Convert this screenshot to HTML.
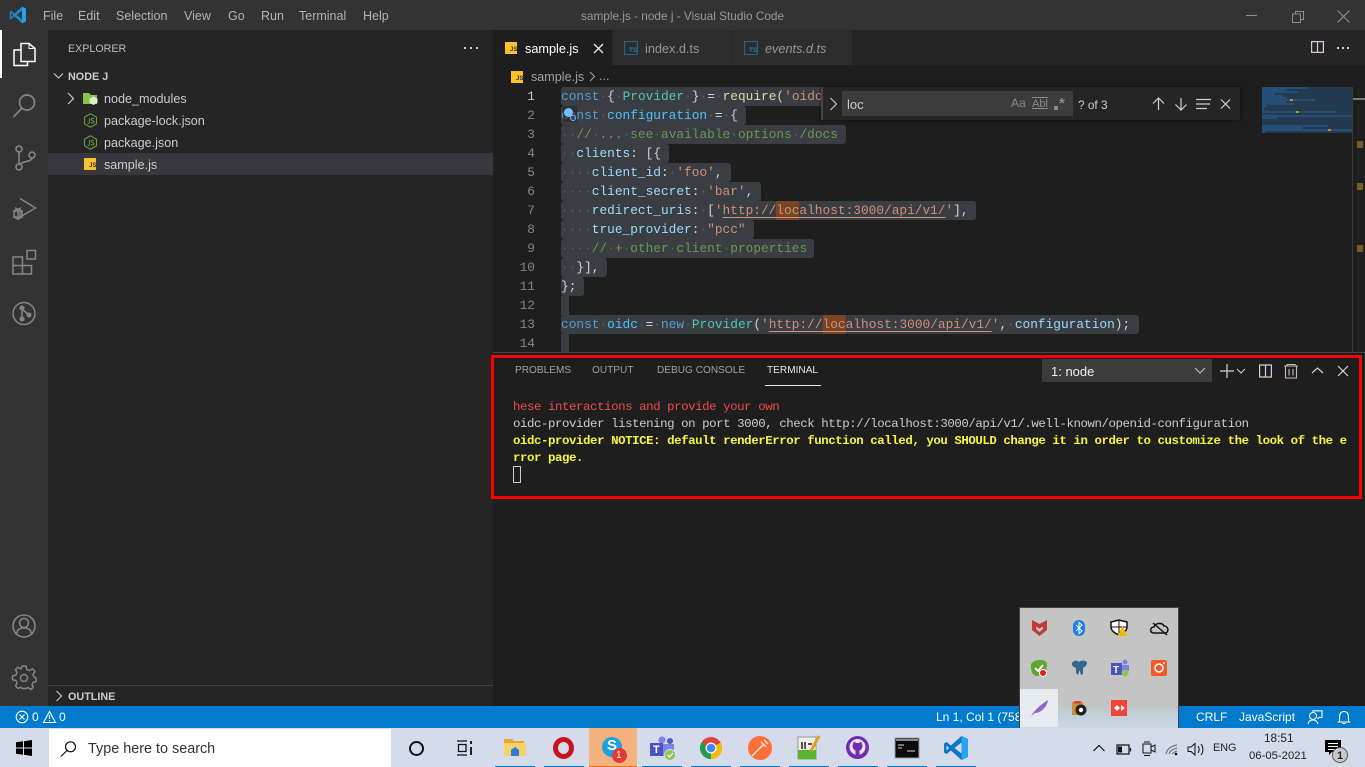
<!DOCTYPE html>
<html><head><meta charset="utf-8"><title>sample.js - node j - Visual Studio Code</title>
<style>
*{box-sizing:border-box}
html,body{margin:0;padding:0;width:1365px;height:767px;overflow:hidden;background:#1e1e1e}
body{position:relative;font-family:"Liberation Sans",sans-serif;color:#ccc}
.b{position:absolute}
.t{position:absolute;white-space:pre;line-height:20px;height:20px}
svg{position:absolute;overflow:visible}
.m{font-size:12.5px;color:#b4b4b4;top:6px}
.tree{font-size:12.6px;color:#ccc}
.c{position:absolute;left:561px;height:19px;line-height:19px;font-family:"Liberation Mono",monospace;font-size:12.82px;white-space:pre;color:#d4d4d4}
.n{position:absolute;width:40px;left:495px;text-align:right;height:19px;line-height:19px;font-family:"Liberation Mono",monospace;font-size:12.82px;color:#858585}
.s{position:absolute;left:561px;height:19px;background:#3a3d41;border-radius:3px}
.h{position:absolute;height:19px;background:#7a4527;width:23px}
i{font-style:normal;color:#5c5f62}
.k{color:#569cd6}.v{color:#4fc1ff}.p{color:#9cdcfe}.g{color:#4ec9b0}.r{color:#ce9178}.u{color:#6a9955}.f{color:#dcdcaa}
.l{text-decoration:underline;text-underline-offset:3px;text-decoration-thickness:1px}
.tm{position:absolute;left:513px;font-family:"Liberation Mono",monospace;font-size:12.4px;letter-spacing:-.43px;height:17px;line-height:17px;white-space:pre;color:#ccc}
.pt{font-size:10.1px;color:#a0a0a0;top:361px}
.st{font-size:12px;color:#fff;top:707px}
.tb{position:absolute;top:766px;height:1px;background:#0078d4;width:40px}
</style></head><body>

<!-- title bar -->
<div class="b" style="left:0;top:0;width:1365px;height:30px;background:#333"></div>
<svg style="left:9px;top:6px" width="18" height="18" viewBox="0 0 18 18"><path d="M13 .8 17 2.6V15.4L13 17.2 5.6 10.4 2 13.2.8 12.6V5.4L2 4.8 5.6 7.6Z" fill="#1a8ad4"/><path d="M13 .8 17 2.6V15.4L13 17.2Z" fill="#27a3ee"/><path d="M13 4.8V13.2L7.5 9Z" fill="#333"/><path d="M2.2 6.8V11.2L4.3 9Z" fill="#333"/></svg>
<div class="t m" style="left:43px">File</div>
<div class="t m" style="left:78px">Edit</div>
<div class="t m" style="left:116px">Selection</div>
<div class="t m" style="left:184px">View</div>
<div class="t m" style="left:228px">Go</div>
<div class="t m" style="left:261px">Run</div>
<div class="t m" style="left:299px">Terminal</div>
<div class="t m" style="left:363px">Help</div>
<div class="t" style="left:581px;top:6px;font-size:11.8px;color:#999">sample.js - node j - Visual Studio Code</div>
<svg style="left:1240px;top:8px" width="125" height="16" fill="none" stroke="#8e8e8e"><path d="M6 7.5H17"/><path d="M52.5 6V14.5H60.5V6ZM55.5 5.5V3.5H63.5V11.5H61"/><path d="M97.5 2.5 109.5 14.5M109.5 2.5 97.5 14.5" stroke-width="1.2"/></svg>

<!-- activity bar -->
<div class="b" style="left:0;top:30px;width:48px;height:676px;background:#333"></div>
<div class="b" style="left:0;top:30px;width:2px;height:48px;background:#fff"></div>
<svg style="left:12px;top:41px" width="24" height="26" fill="none" stroke="#fff" stroke-width="1.5"><path d="M9 2.5H17L23 7.5V20.5H9Z"/><path d="M17 2.5V7.5H23" stroke-width="1"/><path d="M9 9H2V24.5H15.5V20.5"/></svg>
<svg style="left:12px;top:93px" width="24" height="26" fill="none" stroke="#858585" stroke-width="1.7"><circle cx="15" cy="9.5" r="7.5"/><path d="M10 15 1.5 24"/></svg>
<svg style="left:12px;top:145px" width="24" height="26" fill="none" stroke="#858585" stroke-width="1.6"><circle cx="7" cy="4" r="3"/><circle cx="7" cy="22" r="3"/><circle cx="20" cy="10" r="3"/><path d="M7 7V19M20 13C20 17 9 16 8 20"/></svg>
<svg style="left:12px;top:197px" width="26" height="26" fill="none" stroke="#858585" stroke-width="1.5"><path d="M8 1.5 23.5 11 8 20V15"/><ellipse cx="6" cy="17" rx="4" ry="5"/><path d="M1 14H11M1 20H11M6 12V22M3 10.5 5 12.5M9 10.5 7 12.5"/></svg>
<svg style="left:12px;top:249px" width="26" height="26" fill="none" stroke="#858585" stroke-width="1.5"><path d="M1 8H10.5V25H1ZM1 16.5H19.500V25H10.500M10.500 8V16.500"/><path d="M15 1.500H23.500V10H15Z"/></svg>
<svg style="left:12px;top:301px" width="24" height="24" fill="none" stroke="#858585" stroke-width="1.5"><circle cx="12" cy="12.500" r="11"/><path d="M10 8V18M10 8 16.500 13.500"/><circle cx="10" cy="7" r="1.800" fill="#858585"/><circle cx="10" cy="18" r="1.800" fill="#858585"/><circle cx="17" cy="14" r="1.800" fill="#858585"/></svg>
<svg style="left:12px;top:614px" width="24" height="24" fill="none" stroke="#858585" stroke-width="1.6"><circle cx="12" cy="12" r="11"/><circle cx="12" cy="9" r="4.500"/><path d="M4.500 20C5 15 9 14 12 14S19 15 19.500 20"/></svg>
<svg style="left:12px;top:665px" width="24" height="24" fill="none" stroke="#858585" stroke-width="1.500"><path d="M10 1H14L14.800 4.500 17.500 5.600 20.500 3.800 23 6.500 21 9.500 22 12 24 13V16.500L21 17.500 20 20 21.500 22 19 24.500 16 22.500 14.500 23.500H10L9 22 6 23.500 3.500 21 5 18 4 15.500 .5 14.800V11L4 10 5 7.500 3.500 4.500 6 2.200 9 4Z" stroke-linejoin="round"/><circle cx="12" cy="13" r="3.500"/></svg>

<!-- sidebar -->
<div class="b" style="left:48px;top:30px;width:445px;height:676px;background:#252526"></div>
<div class="t" style="left:68px;top:39px;font-size:10.700px;color:#bbb">EXPLORER</div>
<div class="b" style="left:464px;top:47px;width:2px;height:2px;background:#ccc;box-shadow:6px 0 #ccc,12px 0 #ccc"></div>
<svg style="left:52px;top:70px" width="12" height="12" fill="none" stroke="#ccc" stroke-width="1.100"><path d="M2 3.500 6.500 8 11 3.500"/></svg>
<div class="t" style="left:68px;top:67px;font-size:10.800px;font-weight:bold;color:#ccc">NODE J</div>
<div class="b" style="left:48px;top:153px;width:445px;height:22px;background:#37373d"></div>
<svg style="left:66px;top:92px" width="12" height="14" fill="none" stroke="#ccc" stroke-width="1.200"><path d="M2 1 7.500 6.500 2 12"/></svg>
<svg style="left:83px;top:92px" width="16" height="14"><path d="M0 1H6L8 3H14V12H0Z" fill="#8bc34a"/><path d="M10.500 4.500 14.500 6.800V10.800L10.500 13 6.500 10.800V6.800Z" fill="#dcedc8"/></svg>
<div class="t tree" style="left:104px;top:89px">node_modules</div>
<svg style="left:83px;top:113px" width="15" height="15" fill="none" stroke="#6d9b3a" stroke-width="1.100"><path d="M7.500.8 13.500 4.200V10.800L7.500 14.200 1.500 10.800V4.200Z"/><path d="M6.500 5V9.500C6.500 10.500 5 10.500 4.500 9.800M11 6C10 4.800 8 5 8.200 6.400 8.400 7.800 11 7.300 11 8.800 11 10.300 8.800 10.300 8 9.300" stroke-width=".9"/></svg>
<div class="t tree" style="left:104px;top:111px">package-lock.json</div>
<svg style="left:83px;top:135px" width="15" height="15" fill="none" stroke="#6d9b3a" stroke-width="1.100"><path d="M7.500.8 13.500 4.200V10.800L7.500 14.200 1.500 10.800V4.200Z"/><path d="M6.500 5V9.500C6.500 10.500 5 10.500 4.500 9.800M11 6C10 4.800 8 5 8.200 6.400 8.400 7.800 11 7.300 11 8.800 11 10.300 8.800 10.300 8 9.300" stroke-width=".9"/></svg>
<div class="t tree" style="left:104px;top:133px">package.json</div>
<div class="b" style="left:84px;top:158px;width:12px;height:12px;background:#fbc02d"></div>
<div class="t" style="left:89px;top:156px;font-size:6px;font-weight:bold;color:#333">JS</div>
<div class="t tree" style="left:104px;top:155px">sample.js</div>
<div class="b" style="left:48px;top:685px;width:445px;height:1px;background:#3f3f46"></div>
<svg style="left:55px;top:690px" width="8" height="12" fill="none" stroke="#ccc" stroke-width="1.100"><path d="M1.500 1 6.500 6 1.500 11"/></svg>
<div class="t" style="left:68px;top:687px;font-size:10.800px;font-weight:bold;color:#ccc">OUTLINE</div>

<!-- tabs -->
<div class="b" style="left:493px;top:30px;width:872px;height:35px;background:#252526"></div>
<div class="b" style="left:493px;top:30px;width:119px;height:35px;background:#1e1e1e"></div>
<div class="b" style="left:613px;top:30px;width:119px;height:35px;background:#2d2d2d"></div>
<div class="b" style="left:733px;top:30px;width:119px;height:35px;background:#2d2d2d"></div>
<div class="b" style="left:505px;top:42px;width:12px;height:12px;background:#fbc02d"></div>
<div class="t" style="left:510px;top:40px;font-size:6px;font-weight:bold;color:#333">JS</div>
<div class="t" style="left:525px;top:39px;font-size:12.700px;color:#fff">sample.js</div>
<svg style="left:593px;top:43px" width="11" height="11" fill="none" stroke="#e8e8e8" stroke-width="1.300"><path d="M1 1 10 10M10 1 1 10"/></svg>
<div class="b" style="left:624px;top:41px;width:14px;height:14px;border:1.500px solid #1c6a94"></div>
<div class="t" style="left:629px;top:41px;font-size:6.500px;font-weight:bold;color:#2a7aa8">TS</div>
<div class="t" style="left:645px;top:39px;font-size:12.700px;color:#969696">index.d.ts</div>
<div class="b" style="left:744px;top:41px;width:14px;height:14px;border:1.500px solid #1c6a94"></div>
<div class="t" style="left:749px;top:41px;font-size:6.500px;font-weight:bold;color:#2a7aa8">TS</div>
<div class="t" style="left:765px;top:39px;font-size:12.700px;color:#969696;font-style:italic">events.d.ts</div>
<svg style="left:1311px;top:41px" width="14" height="13" fill="none" stroke="#d8c8e0" stroke-width="1.200"><path d="M.6.6H12.400V11.400H.6ZM6.500.6V11.400"/></svg>
<div class="b" style="left:1337px;top:47px;width:2px;height:2px;background:#ccc;box-shadow:5px 0 #ccc,10px 0 #ccc"></div>

<!-- breadcrumb -->
<div class="b" style="left:511px;top:71px;width:12px;height:12px;background:#fbc02d"></div>
<div class="t" style="left:516px;top:69px;font-size:6px;font-weight:bold;color:#333">JS</div>
<div class="t" style="left:531px;top:67px;font-size:12.600px;color:#a0a0a0">sample.js</div>
<svg style="left:589px;top:71px" width="8" height="11" fill="none" stroke="#a0a0a0" stroke-width="1.100"><path d="M1 1 5.500 5.500 1 10"/></svg>
<div class="t" style="left:599px;top:66px;font-size:12.600px;color:#a0a0a0">...</div>

<!-- selection -->
<div class="s" style="top:87px;width:270px"></div>
<div class="s" style="top:106px;width:185px"></div>
<div class="s" style="top:125px;width:285px"></div>
<div class="s" style="top:144px;width:108px"></div>
<div class="s" style="top:163px;width:170px"></div>
<div class="s" style="top:182px;width:200px"></div>
<div class="s" style="top:201px;width:415px"></div>
<div class="s" style="top:220px;width:193px"></div>
<div class="s" style="top:239px;width:253px"></div>
<div class="s" style="top:258px;width:46px"></div>
<div class="s" style="top:277px;width:23px"></div>
<div class="s" style="top:296px;width:8px;border-radius:0"></div>
<div class="s" style="top:315px;width:578px"></div>
<div class="s" style="top:334px;width:8px;height:18px;border-radius:0"></div>
<div class="h" style="left:776px;top:201px"></div>
<div class="h" style="left:823px;top:315px"></div>

<!-- line numbers -->
<div class="n" style="top:87px;color:#c6c6c6">1</div><div class="n" style="top:106px">2</div><div class="n" style="top:125px">3</div><div class="n" style="top:144px">4</div><div class="n" style="top:163px">5</div><div class="n" style="top:182px">6</div><div class="n" style="top:201px">7</div><div class="n" style="top:220px">8</div><div class="n" style="top:239px">9</div><div class="n" style="top:258px">10</div><div class="n" style="top:277px">11</div><div class="n" style="top:296px">12</div><div class="n" style="top:315px">13</div><div class="n" style="top:334px">14</div>

<!-- code -->
<div class="c" style="top:87px"><span class="k">const</span><i>·</i>{<i>·</i><span class="g">Provider</span><i>·</i>}<i>·</i>=<i>·</i><span class="f">require</span>(<span class="r">'oidc-provider'</span>);</div>
<div class="c" style="top:106px"><span class="k">const</span><i>·</i><span class="v">configuration</span><i>·</i>=<i>·</i>{</div>
<div class="c" style="top:125px"><i>··</i><span class="u">//<i>·</i>...<i>·</i>see<i>·</i>available<i>·</i>options<i>·</i>/docs</span></div>
<div class="c" style="top:144px"><i>··</i><span class="p">clients</span>:<i> </i>[{</div>
<div class="c" style="top:163px"><i>····</i><span class="p">client_id</span>:<i>·</i><span class="r">'foo'</span>,</div>
<div class="c" style="top:182px"><i>····</i><span class="p">client_secret</span>:<i>·</i><span class="r">'bar'</span>,</div>
<div class="c" style="top:201px"><i>····</i><span class="p">redirect_uris</span>:<i>·</i>[<span class="r">'<span class="l">http://localhost:3000/api/v1/</span>'</span>],</div>
<div class="c" style="top:220px"><i>····</i><span class="p">true_provider</span>:<i>·</i><span class="r">"pcc"</span></div>
<div class="c" style="top:239px"><i>····</i><span class="u">//<i>·</i>+<i>·</i>other<i>·</i>client<i>·</i>properties</span></div>
<div class="c" style="top:258px"><i>··</i>}],</div>
<div class="c" style="top:277px">};</div>
<div class="c" style="top:315px"><span class="k">const</span><i>·</i><span class="v">oidc</span><i>·</i>=<i>·</i><span class="k">new</span><i>·</i><span class="g">Provider</span>(<span class="r">'<span class="l">http://localhost:3000/api/v1/</span>'</span>,<i>·</i><span class="p">configuration</span>);</div>
<div class="b" style="left:563px;top:106px;width:14px;height:16px;background:rgba(37,37,38,.55)"></div>
<div class="b" style="left:564px;top:108px;width:9px;height:9px;border-radius:50%;background:#75beff"></div>
<div class="b" style="left:570px;top:115px;width:6px;height:6px;border-radius:50%;border:1.500px solid #75beff"></div>

<!-- find widget -->
<div class="b" style="left:821px;top:87px;width:419px;height:33px;background:#252526;border-left:2px solid #454545;box-shadow:0 0 4px rgba(0,0,0,.55)"></div>
<svg style="left:829px;top:97px" width="10" height="14" fill="none" stroke="#c5c5c5" stroke-width="1.200"><path d="M1.500 1 7.500 7 1.500 13"/></svg>
<div class="b" style="left:842px;top:91px;width:231px;height:25px;background:#3c3c3c"></div>
<div class="t" style="left:847px;top:95px;font-size:13px;color:#ccc">loc</div>
<div class="t" style="left:1011px;top:93px;font-size:12px;color:#8a8a8a">Aa</div>
<div class="t" style="left:1032px;top:94px;font-size:11px;color:#8a8a8a;text-decoration:underline overline">Abl</div>
<div class="b" style="left:1054px;top:106px;width:4px;height:4px;background:#8a8a8a"></div>
<div class="t" style="left:1059px;top:94px;font-size:15px;font-weight:bold;color:#8a8a8a">*</div>
<div class="t" style="left:1078px;top:95px;font-size:11.800px;color:#ccc">? of 3</div>
<svg style="left:1152px;top:97px" width="80" height="14" fill="none" stroke="#d0d0d0" stroke-width="1.200"><path d="M6.500 13V1M1 6.500 6.500 1 12 6.500"/><path d="M29 1V13M23.500 7.500 29 13 34.500 7.500"/><path d="M44 2.500H59M44 7H58M44 11.500H55"/><path d="M69 2.500 78 11.500M78 2.500 69 11.500"/></svg>

<!-- minimap -->
<svg style="left:1262px;top:87px" width="103" height="46" shape-rendering="crispEdges">
<rect width="90" height="46" fill="#233a50"/>
<g fill="#264f78"><rect y="0" width="46" height="2"/><rect y="2" width="23" height="2"/><rect y="4" width="36" height="2"/><rect y="6" width="13" height="2"/><rect y="8" width="21" height="2"/><rect y="10" width="25" height="2"/><rect y="12" width="53" height="2"/><rect y="14" width="24" height="2"/><rect y="16" width="32" height="2"/><rect y="18" width="5" height="2"/><rect y="20" width="2" height="4"/><rect y="24" width="74" height="2"/><rect y="28" width="90" height="2"/><rect y="30" width="15" height="2"/><rect y="38" width="66" height="2"/><rect y="40" width="40" height="2"/><rect y="42" width="90" height="2"/><rect y="44" width="3" height="2"/></g>
<g fill="#d18616"><rect x="28" y="12" width="3" height="2"/><rect x="34" y="24" width="3" height="2"/><rect x="66" y="42" width="3" height="2"/></g>
</svg>
<div class="b" style="left:1352px;top:87px;width:1px;height:265px;background:#3a3a3a"></div>
<div class="b" style="left:1353px;top:98px;width:12px;height:2px;background:#7a7a7a"></div>
<div class="b" style="left:1357px;top:141px;width:6px;height:7px;background:#7d5a1e"></div>
<div class="b" style="left:1357px;top:183px;width:6px;height:7px;background:#7d5a1e"></div>
<div class="b" style="left:1357px;top:245px;width:6px;height:7px;background:#7d5a1e"></div>

<!-- panel -->
<div class="b" style="left:493px;top:352px;width:872px;height:354px;background:#1e1e1e;border-top:1px solid #454545"></div>
<div class="t pt" style="left:515px">PROBLEMS</div>
<div class="t pt" style="left:592px">OUTPUT</div>
<div class="t pt" style="left:657px">DEBUG CONSOLE</div>
<div class="t pt" style="left:767px;color:#e7e7e7">TERMINAL</div>
<div class="b" style="left:765px;top:385px;width:56px;height:1px;background:#e7e7e7"></div>
<div class="b" style="left:1042px;top:359px;width:170px;height:23px;background:#3c3c3c"></div>
<div class="t" style="left:1051px;top:362px;font-size:13px;color:#f0f0f0">1: node</div>
<svg style="left:1194px;top:367px" width="12" height="8" fill="none" stroke="#c5c5c5" stroke-width="1.100"><path d="M1 1 6 6 11 1"/></svg>
<svg style="left:1220px;top:363px" width="130" height="16" fill="none" stroke="#d4d4d4" stroke-width="1.200"><path d="M7 1V15M0 8H14"/><path d="M17 6 21 10 25 6" stroke-width="1"/><path d="M39.600 2H51.400V14H39.600ZM45.500 2V14" stroke="#d8c8e0"/><path d="M64 3H78M67 3V1.500H75V3M65.500 3.500V15H76.500V3.500M69 6V12.500M73 6V12.500" stroke="#c8b8b8" stroke-width="1.100"/><path d="M92 10 97.500 5 103 10"/><path d="M118 3 128 13M128 3 118 13"/></svg>

<div class="tm" style="top:399px;color:#f14c4c">hese interactions and provide your own</div>
<div class="tm" style="top:416px">oidc-provider listening on port 3000, check http://localhost:3000/api/v1/.well-known/openid-configuration</div>
<div class="tm" style="top:433px;color:#f5f543;font-weight:bold">oidc-provider NOTICE: default renderError function called, you SHOULD change it in order to customize the look of the e</div>
<div class="tm" style="top:450px;color:#f5f543;font-weight:bold">rror page.</div>
<div class="b" style="left:513px;top:466px;width:8px;height:17px;border:1px solid #ccc"></div>

<!-- red box -->
<div class="b" style="left:491px;top:355px;width:871px;height:144px;border:3px solid #f00"></div>

<!-- status bar -->
<div class="b" style="left:0;top:706px;width:1365px;height:22px;background:#007acc"></div>
<svg style="left:15px;top:710px" width="42" height="14" fill="none" stroke="#fff" stroke-width="1.100"><circle cx="7" cy="7" r="5.800"/><path d="M4.500 4.500 9.500 9.500M9.500 4.500 4.500 9.500"/><path d="M34.500 1.500 40.500 12.500H28.500Z"/><path d="M34.500 5V9M34.500 10V11.200"/></svg>
<div class="t st" style="left:32px">0</div>
<div class="t st" style="left:59px">0</div>
<div class="t st" style="left:936px">Ln 1, Col 1 (758</div>
<div class="t st" style="left:1196px">CRLF</div>
<div class="t st" style="left:1239px">JavaScript</div>
<svg style="left:1307px;top:710px" width="50" height="15" fill="none" stroke="#fff" stroke-width="1.100"><circle cx="6" cy="6" r="3.500"/><path d="M1 14C1.500 11 4 10 6 10S10 11 11 14M6 2V.8H15V7.500H12L10.500 9"/><path d="M32.500 12V6.500C32.500 3.500 34.500 1.500 37 1.500S41.500 3.500 41.500 6.500V12H43.500H30.500ZM35.500 13.500H38.500"/></svg>

<!-- taskbar -->
<div class="b" style="left:0;top:728px;width:1365px;height:39px;background:#d4dcec"></div>
<svg style="left:16px;top:740px" width="17" height="16" fill="#000"><path d="M0 2.300 7 1.300V7.500H0ZM8 1.200 16 0V7.500H8ZM0 8.500H7V14.700L0 13.700ZM8 8.500H16V16L8 14.800Z"/></svg>
<div class="b" style="left:49px;top:729px;width:342px;height:38px;background:#fff"></div>
<svg style="left:60px;top:741px" width="17" height="16" fill="none" stroke="#111" stroke-width="1.200"><circle cx="10.500" cy="5.800" r="5"/><path d="M7 9.500 .8 15.500"/></svg>
<div class="t" style="left:88px;top:739px;font-size:14.400px;color:#333">Type here to search</div>
<div class="b" style="left:409px;top:741px;width:15px;height:15px;border-radius:50%;border:2.300px solid #111"></div>
<svg style="left:456px;top:740px" width="17" height="16" fill="none" stroke="#111" stroke-width="1.300"><path d="M1 1H11M1 15H11M2.500 4.500H10V11.500H2.500Z"/><path d="M15 1V4M15 7V15" stroke-width="1.800"/></svg>
<!-- taskbar apps -->
<svg style="left:504px;top:738px" width="22" height="19"><path d="M0 1H8L10 3H20V6H0Z" fill="#e8a92f"/><path d="M0 5H22V18H0Z" fill="#f6d26b"/><path d="M7 12 11 9 15 12V18H7Z" fill="#2b7cd3"/></svg>
<div class="b" style="left:553px;top:737px;width:21px;height:22px;border-radius:50%;border:5px solid #cc1020"></div>
<div class="b" style="left:589px;top:728px;width:48px;height:39px;background:#f4b27f"></div>
<div class="b" style="left:589px;top:766px;width:48px;height:1px;background:#f07010"></div>
<div class="b" style="left:602px;top:737px;width:20px;height:20px;border-radius:50%;background:#1aa3e0"></div>
<div class="t" style="left:607px;top:736px;font-size:15px;font-weight:bold;color:#fff">S</div>
<div class="b" style="left:612px;top:748px;width:15px;height:15px;border-radius:50%;background:#e53935"></div>
<div class="t" style="left:616px;top:746px;font-size:10px;color:#fff">1</div>
<svg style="left:650px;top:736px" width="26" height="26"><circle cx="20" cy="5" r="3" fill="#5059c9"/><circle cx="12" cy="4" r="3.500" fill="#7b83eb"/><path d="M7 8H24V18C24 20 20 22 15 20 11 20 7 17 7 14Z" fill="#7b83eb"/><rect y="7" width="13" height="13" fill="#4b53bc"/><text x="3" y="17" font-size="11" font-weight="bold" fill="#fff" font-family="Liberation Sans">T</text><circle cx="20" cy="19" r="5.500" fill="#92c353" stroke="#d4dcec"/><path d="M17.500 19 19.500 21 23 17" stroke="#fff" fill="none" stroke-width="1.200"/></svg>
<svg style="left:700px;top:737px" width="22" height="22"><circle cx="11" cy="11" r="11" fill="#dd4437"/><path d="M11 11 20.500 5.500A11 11 0 0 1 11 22Z" fill="#fbbc05"/><path d="M11 11 11 22A11 11 0 0 1 1.500 5.500Z" fill="#1e9e4c"/><circle cx="11" cy="11" r="5.500" fill="#fff"/><circle cx="11" cy="11" r="4.300" fill="#4285f4"/></svg>
<svg style="left:748px;top:736px" width="24" height="24"><circle cx="12" cy="12" r="12" fill="#fb6f36"/><path d="M4 20 16 8M13 6 18 11M16 4 20 8" stroke="#ffe6d8" stroke-width="1.500" fill="none"/></svg>
<svg style="left:797px;top:735px" width="24" height="25"><rect x="1" y="2" width="18" height="22" fill="#f0f0e6" stroke="#999"/><rect x="1" y="15" width="18" height="9" fill="#5ab52e"/><path d="M5 7V14M8 7V14M11 9H15" stroke="#222" stroke-width="1.500"/><path d="M14 16 22 1" stroke="#e0a020" stroke-width="3"/></svg>
<svg style="left:846px;top:736px" width="23" height="23"><circle cx="11.500" cy="11.500" r="11.500" fill="#6f2da8"/><circle cx="11.500" cy="11" r="8" fill="#e8e0f2"/><path d="M7 8 8 5.500 10 7H13L15 5.500 16 8C17.500 11 15 14 13.500 14.500V19H9.500V14.500C8 14 5.500 11 7 8Z" fill="#6f2da8"/></svg>
<svg style="left:895px;top:738px" width="24" height="20"><rect width="24" height="20" fill="#0a0a0a" stroke="#9a9a9a"/><rect x="1" y="1" width="22" height="2" fill="#888"/><path d="M3 7H9M3 10H7M12 13H20" stroke="#ddd" fill="none"/></svg>
<svg style="left:944px;top:736px" width="24" height="24"><path d="M17.500 0 24 3V21L17.500 24 7 14.500 2.500 18 0 16.500V7.500L2.500 6 7 9.500Z" fill="#0a78c4"/><path d="M17.500 0 24 3V21L17.500 24Z" fill="#28a5ee"/><path d="M17.500 6.500V17.500L10.500 12Z" fill="#d4dcec"/><path d="M2.500 9.500V14.500L5 12Z" fill="#d4dcec"/></svg>
<div class="tb" style="left:495px"></div><div class="tb" style="left:544px"></div><div class="tb" style="left:642px"></div><div class="tb" style="left:691px"></div><div class="tb" style="left:740px"></div><div class="tb" style="left:789px"></div><div class="tb" style="left:838px"></div><div class="tb" style="left:887px"></div><div class="tb" style="left:936px"></div>

<!-- tray -->
<svg style="left:1093px;top:741px" width="115" height="16" fill="none" stroke="#111" stroke-width="1.200"><path d="M.5 10 6 4.500 11.500 10"/><path d="M24 4H36V13H24Z"/><rect x="25" y="5.500" width="4" height="6" fill="#111" stroke="none"/><path d="M37.500 7V10.500"/><path d="M50 3H58V12H50ZM58 6 62 4V11L58 9M51 1H57M51 14.500H57" stroke-width="1"/><path d="M73 13C74 8 78 5 84 4M76 13C77 10 80 8 84 7M79 13C80 12 81 11 84 10" stroke="#777"/><circle cx="83" cy="13" r="1.300" fill="#111" stroke="none"/><path d="M95 6H98L102 2.500V14L98 10.500H95ZM105 5C106.500 7 106.500 10 105 12M108 3C110.500 6 110.500 11 108 14" stroke-width="1"/></svg>
<div class="t" style="left:1213px;top:738px;font-size:10.800px;color:#222">ENG</div>
<div class="t" style="left:1264px;top:728px;font-size:11.800px;color:#222">18:51</div>
<div class="t" style="left:1249px;top:746px;font-size:11.300px;color:#222">06-05-2021</div>
<svg style="left:1325px;top:740px" width="26" height="25"><path d="M0 0H16V12H7L4 15V12H0Z" fill="#000"/><path d="M3 3.500H13M3 6.500H13M3 9.500H10" stroke="#fff"/><circle cx="15" cy="15" r="7.500" fill="#c8c8c8" stroke="#555"/><text x="12" y="19" font-size="11" font-weight="bold" fill="#222" font-family="Liberation Sans">1</text></svg>

<!-- tray popup -->
<div class="b" style="left:1019px;top:607px;width:160px;height:121px;background:linear-gradient(180deg,#c4c4c4 0,#c4c4c4 82%,#bfd0da 88%,#cbd8e2 100%);border:1px solid #444;border-bottom:none"></div>
<div class="b" style="left:1020px;top:689px;width:38px;height:38px;background:#e6ebf0"></div>
<svg style="left:1019px;top:607px" width="160" height="121">
<path d="M13 13 20.500 17 28 13V23L20.500 29 13 23Z" fill="#c13c38"/><path d="M17 19.500 20.500 21.500 24 19.500V22L20.500 25 17 22Z" fill="#c4c4c4"/>
<rect x="54" y="13" width="12" height="16" rx="6" fill="#1a7fe8"/><path d="M57 18 63 24 60 26.500V15.500L63 18 57 24" stroke="#fff" fill="none"/>
<path d="M92 15 100 13 108 15V20C108 24 103 27 100 28 97 27 92 24 92 20Z" fill="#fff" stroke="#111" stroke-width="1.500"/><path d="M100 13V28M92 20H108" stroke="#111"/><path d="M103.500 19 108.500 29H98.500Z" fill="#f5b800"/>
<path d="M135 26C130 26 131 20 135 20 136 16 143 15 145 19 150 19 150 26 146 26Z" fill="none" stroke="#111" stroke-width="1.500"/><path d="M134 16 148 28" stroke="#111" stroke-width="1.400"/>
<path d="M12 60C11 55 16 53 22 53 26 53 28 55 28 58 28 65 23 69 18 69 14 69 12 65 12 60Z" fill="#5fa62e"/><path d="M16 61 19 64 24 58" stroke="#fff" fill="none" stroke-width="1.800"/><circle cx="24" cy="66" r="3.500" fill="#e02020" stroke="#fff"/>
<path d="M53 56C55 53 58 53 60 55 62 53 66 53 68 55 68 58 66 60 64 61V67L62 68 60.500 63 59 68 57 66 57 61C54 60 52 58 53 56Z" fill="#336791"/>
<rect x="92" y="56" width="11" height="12" fill="#4b53bc"/><circle cx="106" cy="55" r="2.500" fill="#7b83eb"/><text x="94" y="66" font-size="10" font-weight="bold" fill="#fff" font-family="Liberation Sans">T</text><path d="M103 58H110V64H103Z" fill="#7b83eb"/><circle cx="106" cy="66" r="3.500" fill="#92c353"/>
<rect x="132" y="53" width="16" height="16" rx="2" fill="#f05a28"/><circle cx="140" cy="61" r="4" fill="none" stroke="#fff" stroke-width="1.600"/><circle cx="145" cy="56" r="1" fill="#fff"/>
<path d="M14 106C18 101 24 96 29 93 28 100 22 106 16 106L12 109Z" fill="#9265c9"/>
<rect x="53" y="95" width="11" height="13" fill="#c78f3c"/><circle cx="62" cy="103" r="5.500" fill="#222"/><circle cx="62" cy="103" r="2.200" fill="#fff"/><rect x="55" y="94" width="7" height="2.500" fill="#d44"/>
<rect x="92" y="93" width="16" height="16" fill="#f44336"/><path d="M95 101 98 98 101 101 98 104ZM102 98 106 101 102 104Z" fill="#fff"/>
</svg>
</body></html>
